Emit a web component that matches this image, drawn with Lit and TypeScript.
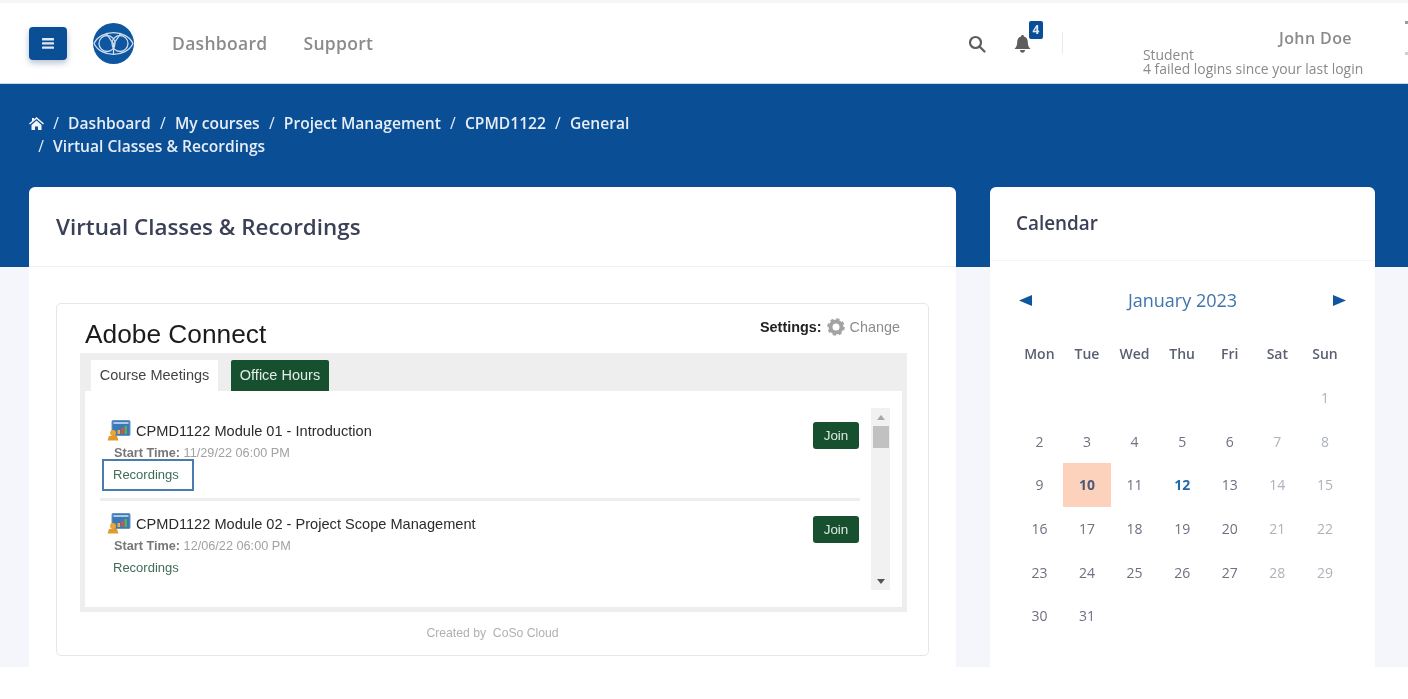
import { css, html, LitElement } from "lit";
import { customElement } from "lit/decorators.js";

const crumbs = ["Dashboard", "My courses", "Project Management", "CPMD1122", "General"];
const days = ["Mon", "Tue", "Wed", "Thu", "Fri", "Sat", "Sun"];
const meetings = [
  { title: "CPMD1122 Module 01 - Introduction", start: "11/29/22 06:00 PM", active: true },
  { title: "CPMD1122 Module 02 - Project Scope Management", start: "12/06/22 06:00 PM", active: false },
];

// january 2023 starts on a sunday, so six leading blanks
const cells: (number | null)[] = [null, null, null, null, null, null];
for (let d = 1; d <= 31; d++) cells.push(d);

function dayClass(d: number, i: number) {
  if (d === 10) return "cell today";
  if (d === 12) return "cell event";
  if (i % 7 >= 5) return "cell weekend";
  return "cell";
}

const meetingIcon = html`
  <svg class="m-icon" width="24" height="21" viewBox="0 0 24 21">
    <rect x="5" y="0.5" width="18" height="15" rx="1" fill="#3c78b8" stroke="#6b94bf" />
    <rect x="6.5" y="2" width="15" height="2" fill="#a9cbea" />
    <rect x="14" y="8" width="2.5" height="6" fill="#d9503f" />
    <rect x="17.5" y="6" width="2.5" height="8" fill="#5fae55" />
    <rect x="10.5" y="10" width="2.5" height="4" fill="#e8b23c" />
    <circle cx="6" cy="13" r="3" fill="#f0a62c" />
    <path d="M0.5 20.5 L2 16 H10 L11.5 20.5 Z" fill="#e39a2a" />
  </svg>
`;

@customElement("app-root")
export class AppRoot extends LitElement {
  static styles = css`
    :host {
      display: block;
      height: 699px;
      overflow: hidden;
      background: #fff;
      font-family: "Open Sans", sans-serif;
    }

    * {
      box-sizing: border-box;
    }

    .page {
      height: 667px;
      overflow: hidden;
      background: #f4f6fb;
      filter: blur(0.35px);
    }

    /* top bar */
    .topbar {
      height: 84px;
      border-top: 3px solid #f6f6f6;
      border-bottom: 1px solid #c9d6e3;
      background: #fff;
      display: flex;
      align-items: center;
      padding-left: 29px;
      position: relative;
    }

    .burger {
      width: 38px;
      height: 33px;
      background: #0a4f96;
      border-radius: 4px;
      box-shadow: 0 3px 6px rgba(10, 50, 100, 0.3);
      display: flex;
      align-items: center;
      justify-content: center;
    }

    .logo {
      margin-left: 26px;
      display: block;
    }

    .nav {
      display: flex;
      gap: 36px;
      margin-left: 38px;
      margin-top: -1px;
      font-size: 17.5px;
      font-weight: 600;
      color: #8b8b8b;
      letter-spacing: 0.3px;
    }

    .tools {
      margin-left: auto;
      display: flex;
      align-items: center;
      margin-right: 44px;
    }

    .search {
      display: block;
      margin-top: 1px;
      margin-left: -2px;
    }

    .bell {
      position: relative;
      margin-left: 28px;
      margin-top: 1px;
      height: 18px;
    }

    .badge {
      position: absolute;
      left: 15px;
      top: -14px;
      width: 14px;
      height: 18px;
      background: #0a4f96;
      border-radius: 2px;
      color: #dfe9f3;
      font-size: 12px;
      font-weight: 700;
      line-height: 18px;
      text-align: center;
    }

    .vline {
      width: 1px;
      height: 22px;
      margin-left: 31px;
      background: #e3eaf0;
    }

    .user {
      margin-left: 80px;
      width: 221px;
      color: #8a8a8a;
      font-size: 13.9px;
      line-height: 14px;
      padding-top: 16px;
      white-space: nowrap;
    }

    .user .name {
      font-size: 16px;
      font-weight: 600;
      line-height: 22px;
      margin-top: 0;
      margin-bottom: -1px;
      padding-left: 136px;
      letter-spacing: 0.4px;
    }

    /* cut off menu caret at the window edge */
    .edge {
      position: absolute;
      right: 0;
      top: 18px;
      width: 3px;
      height: 3px;
      background: #9a9a9a;
      box-shadow: 0 31px 0 #cfcfcf;
    }

    /* blue band */
    .band {
      height: 183px;
      background: #0a4f96;
      padding: 28px 29px 0;
      color: #e6edf5;
      font-size: 15.6px;
      font-weight: 600;
      line-height: 23px;
    }

    .crumbs {
      display: flex;
      align-items: center;
    }

    .crumbs svg {
      display: block;
    }

    .sep {
      font-weight: 400;
      margin: 0 9.2px;
    }

    .columns {
      display: grid;
      grid-template-columns: 927px 385px;
      gap: 34px;
      padding-left: 29px;
      margin-top: -80px;
    }

    .card {
      background: #fff;
      border-radius: 6px 6px 0 0;
      height: 500px;
    }

    .card-head {
      height: 80px;
      padding: 24px 27px 0;
      border-bottom: 1px solid #f0f1f4;
      font-size: 22.4px;
      font-weight: 600;
      color: #3a4057;
    }

    .card-body {
      padding: 36px 27px 0;
    }

    /* adobe connect widget */
    .widget {
      height: 353px;
      border: 1px solid #e6e6e6;
      border-radius: 5px;
      padding: 13px 23px 0;
      font-family: "Liberation Sans", Arial, sans-serif;
    }

    .w-head {
      display: flex;
      justify-content: space-between;
      padding: 0 5px;
      height: 36px;
    }

    .w-title {
      font-size: 26.3px;
      line-height: 34px;
      color: #1b1b1b;
    }

    .w-settings {
      display: flex;
      align-items: center;
      gap: 5px;
      height: 22px;
      margin-top: -1px;
      font-size: 14.4px;
      color: #8c8c8c;
    }

    .w-settings b {
      color: #222;
    }

    .w-frame {
      width: 827px;
      height: 259px;
      background: #eee;
      padding: 7px 5px 5px;
    }

    .tabs {
      display: flex;
      gap: 13px;
      padding-left: 6px;
      height: 31px;
      font-size: 14.5px;
      line-height: 31px;
    }

    .tab {
      width: 127px;
      background: #fff;
      color: #444;
      text-align: center;
    }

    .tab.green {
      width: 98px;
      background: #17502f;
      color: #e5ece7;
      border-radius: 2px 2px 0 0;
    }

    .w-content {
      height: 216px;
      background: #fff;
      padding: 17px 11px 0 15px;
      display: flex;
    }

    .list {
      width: 760px;
    }

    .meeting {
      position: relative;
      height: 90px;
      padding-top: 12px;
    }

    .meeting + .meeting {
      border-top: 3px solid #eee;
    }

    .meeting + .meeting .join {
      top: 15px;
    }

    .m-title {
      display: flex;
      align-items: center;
      gap: 5px;
      margin-left: 7px;
      font-size: 14.6px;
      line-height: 20px;
      color: #2b2b2b;
    }

    .m-icon {
      display: block;
    }

    .m-start {
      margin: 5px 0 0 14px;
      font-size: 12.7px;
      line-height: 15px;
      color: #a2a2a2;
    }

    .m-start b {
      color: #777;
    }

    .m-rec {
      margin: 6px 0 0 13px;
      font-size: 13px;
      line-height: 16px;
      color: #3f6d58;
    }

    .hl {
      position: absolute;
      left: 2px;
      top: 51px;
      width: 92px;
      height: 32px;
      border: 2px solid #4a7bb0;
    }

    .join {
      position: absolute;
      right: 1px;
      top: 14px;
      width: 46px;
      height: 27px;
      background: #17502f;
      border-radius: 3px;
      color: #dfe8e2;
      font-size: 13.4px;
      line-height: 27px;
      text-align: center;
    }

    .scroll {
      width: 19px;
      height: 182px;
      margin-left: 11px;
      background: #f1f1f1;
      display: flex;
      flex-direction: column;
      align-items: center;
    }

    .arrow {
      height: 18px;
      display: flex;
      align-items: center;
      justify-content: center;
      width: 100%;
    }

    .thumb {
      width: 16px;
      height: 22px;
      background: #c1c1c1;
    }

    .grow {
      flex: 1;
    }

    .credit {
      margin-top: 14px;
      text-align: center;
      font-size: 12.2px;
      color: #b0b0b0;
    }

    /* calendar */
    .cal-head {
      height: 74px;
      padding: 23px 26px 0;
      border-bottom: 1px solid #f3f4f7;
      font-size: 18.9px;
      font-weight: 600;
      color: #3a4057;
    }

    .cal-nav {
      display: flex;
      align-items: center;
      justify-content: space-between;
      padding: 24px 29px 0 29px;
      height: 54px;
      color: #3f74ad;
      font-size: 18px;
    }

    .grid {
      display: grid;
      grid-template-columns: repeat(7, 47.6px);
      padding-left: 25.6px;
      margin-top: 24px;
    }

    .dow {
      height: 37px;
      line-height: 30px;
      text-align: center;
      font-size: 14px;
      font-weight: 600;
      color: #5a5f72;
    }

    .cell {
      height: 43.7px;
      line-height: 43.7px;
      text-align: center;
      font-size: 14px;
      color: #6d7180;
    }

    .cell.weekend {
      color: #adb3bc;
    }

    .cell.today {
      background: #fdd2bc;
      color: #4d5a78;
      font-weight: 700;
    }

    .cell.event {
      color: #1f6aa8;
      font-weight: 700;
    }
  `;

  render() {
    return html`
      <div class="page">
        <div class="topbar">
          <div class="burger">
            <svg width="12" height="11" viewBox="0 0 12 11" fill="#dfe9f3">
              <rect y="0" width="12" height="2.4" rx="0.5" />
              <rect y="4.2" width="12" height="2.4" rx="0.5" />
              <rect y="8.4" width="12" height="2.4" rx="0.5" />
            </svg>
          </div>
          <svg class="logo" width="41" height="41" viewBox="0 0 41 41">
            <circle cx="20.5" cy="20.5" r="20.5" fill="#0f56a0" />
            <g fill="none" stroke="#cfdeee" stroke-width="1.3">
              <path d="M1 20.5 C8 6 33 6 40 20.5 C33 35 8 35 1 20.5 Z" />
              <circle cx="14" cy="20.5" r="8" />
              <circle cx="27" cy="20.5" r="8" />
              <path d="M13 10 L20.5 21 L28 10" />
              <path d="M20.5 21 V31" />
            </g>
          </svg>
          <div class="nav"><span>Dashboard</span><span>Support</span></div>
          <div class="tools">
            <svg class="search" width="18" height="18" viewBox="0 0 18 18" fill="none" stroke="#5d5d5d" stroke-width="2.2">
              <circle cx="7.5" cy="7.5" r="5.5" />
              <path d="M11.5 11.5 L16.5 16.5" stroke-linecap="round" />
            </svg>
            <div class="bell">
              <svg width="17" height="18" viewBox="0 0 17 18" fill="#5d5d5d">
                <path d="M8.5 0 C9.4 0 10 .6 10 1.5 C12.6 2.2 13.8 4.4 13.8 7 C13.8 10.5 14.6 12 16.5 14 H.5 C2.4 12 3.2 10.5 3.2 7 C3.2 4.4 4.4 2.2 7 1.5 C7 .6 7.6 0 8.5 0 Z" />
                <path d="M6 15 H11 C11 16.6 9.9 17.8 8.5 17.8 C7.1 17.8 6 16.6 6 15 Z" />
              </svg>
              <span class="badge">4</span>
            </div>
            <div class="vline"></div>
            <div class="user">
              <div class="name">John Doe</div>
              <div>Student</div>
              <div>4 failed logins since your last login</div>
            </div>
          </div>
          <div class="edge"></div>
        </div>

        <div class="band">
          <div class="crumbs">
            <svg width="15" height="13" viewBox="0 0 15 13" fill="#f2f5f9">
              <path d="M7.5 0 L15 6.6 L14 7.6 L7.5 2 L1 7.6 L0 6.6 L3 4 V1 H5 V2.2 Z" />
              <path d="M2.5 8 L7.5 3.6 L12.5 8 V13 H9 V9.5 H6 V13 H2.5 Z" />
            </svg>
            ${crumbs.map((c) => html`<span class="sep">/</span><span>${c}</span>`)}
          </div>
          <div class="crumbs">
            <span class="sep">/</span><span>Virtual Classes &amp; Recordings</span>
          </div>
        </div>

        <div class="columns">
          <div class="card">
            <div class="card-head">Virtual Classes &amp; Recordings</div>
            <div class="card-body">
              <div class="widget">
                <div class="w-head">
                  <div class="w-title">Adobe Connect</div>
                  <div class="w-settings">
                    <b>Settings:</b>
                    <svg width="18" height="18" viewBox="0 0 18 18">
                      <circle cx="9" cy="9" r="5.5" fill="none" stroke="#a3a3a3" stroke-width="4" />
                      <circle cx="9" cy="9" r="7.6" fill="none" stroke="#a3a3a3" stroke-width="2.4" stroke-dasharray="3 3" />
                    </svg>
                    <span>Change</span>
                  </div>
                </div>
                <div class="w-frame">
                  <div class="tabs">
                    <div class="tab">Course Meetings</div>
                    <div class="tab green">Office Hours</div>
                  </div>
                  <div class="w-content">
                    <div class="list">
                      ${meetings.map(
                        (m) => html`
                          <div class="meeting">
                            <div class="m-title">${meetingIcon}<span>${m.title}</span></div>
                            <div class="m-start"><b>Start Time:</b> ${m.start}</div>
                            <div class="m-rec">Recordings</div>
                            ${m.active ? html`<div class="hl"></div>` : ""}
                            <div class="join">Join</div>
                          </div>
                        `
                      )}
                    </div>
                    <div class="scroll">
                      <div class="arrow">
                        <svg width="8" height="5" viewBox="0 0 8 5" fill="#a8a8a8"><path d="M4 0 L8 5 H0 Z" /></svg>
                      </div>
                      <div class="thumb"></div>
                      <div class="grow"></div>
                      <div class="arrow">
                        <svg width="8" height="5" viewBox="0 0 8 5" fill="#555"><path d="M0 0 H8 L4 5 Z" /></svg>
                      </div>
                    </div>
                  </div>
                </div>
                <div class="credit">Created by&nbsp; CoSo Cloud</div>
              </div>
            </div>
          </div>

          <div class="card">
            <div class="cal-head">Calendar</div>
            <div class="cal-nav">
              <svg width="13" height="11" viewBox="0 0 13 11" fill="#0f56a0"><path d="M0 5.5 L13 0 V11 Z" /></svg>
              <span>January 2023</span>
              <svg width="13" height="11" viewBox="0 0 13 11" fill="#0f56a0"><path d="M13 5.5 L0 0 V11 Z" /></svg>
            </div>
            <div class="grid">
              ${days.map((d) => html`<div class="dow">${d}</div>`)}
              ${cells.map((d, i) =>
                d === null ? html`<div class="cell"></div>` : html`<div class=${dayClass(d, i)}>${d}</div>`
              )}
            </div>
          </div>
        </div>
      </div>
    `;
  }
}
